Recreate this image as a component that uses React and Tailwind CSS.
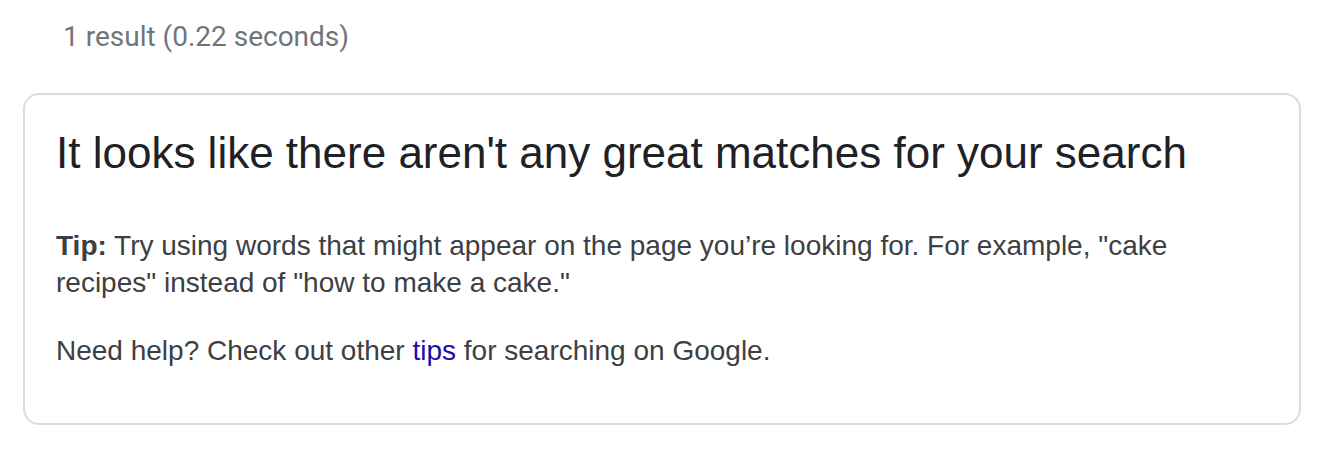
export default function App() {
  return (
    <div className="min-h-screen bg-white">
      <div
        className="pt-[19px] pl-[63px] text-[28px] leading-[36px] text-[#70757a]"
        style={{ fontFamily: 'Roboto, "Liberation Sans", sans-serif' }}
      >
        1 result (0.22 seconds)
      </div>

      <div
        className="mt-[38px] ml-[23px] w-[1278px] rounded-[16px] border-2 border-[#dadce0] px-[31px] pt-[32px] pb-[54px]"
        style={{ fontFamily: '"Liberation Sans", Arial, sans-serif' }}
      >
        <h2 className="text-[44px] leading-[52px] text-[#202124]">
          It looks like there aren't any great matches for your search
        </h2>

        <p className="mt-[48px] text-[28px] leading-[37px] text-[#3c4043]">
          <span className="font-bold">Tip:</span> Try using words that might appear on the page
          you’re looking for. For example, "cake recipes" instead of "how to make a cake."
        </p>

        <p className="mt-[31px] text-[28px] leading-[37px] text-[#3c4043]">
          Need help? Check out other{' '}
          <a href="#" className="text-[#1a0dab]">
            tips
          </a>{' '}
          for searching on Google.
        </p>
      </div>
    </div>
  );
}
